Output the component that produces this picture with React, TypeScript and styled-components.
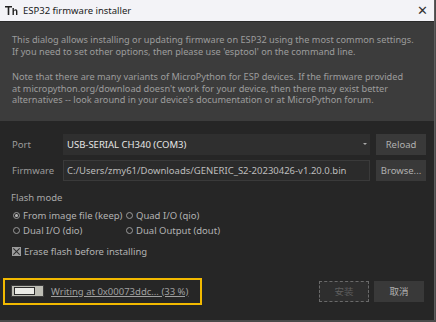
import styled, { createGlobalStyle } from "styled-components"

const GlobalStyle = createGlobalStyle`
  html, body {
    margin: 0;
    padding: 0;
    background: #4a4a4a;
  }
  body {
    font-family: "Noto Sans", "Noto Sans CJK SC", sans-serif;
  }
`

const Window = styled.div`
  width: 434px;
  height: 320px;
  border-right: 1px solid #5c5c5c;
  background: #262626;
  display: flex;
  flex-direction: column;
  overflow: hidden;
`

const TitleBar = styled.div`
  height: 21px;
  background: #f3f3f7;
  border-bottom: 1px solid #2a2a2a;
  display: flex;
  align-items: center;
  padding: 0 6px 0 5px;
  gap: 4px;
  font-size: 9.5px;
  color: #1a1a1a;
`

const Title = styled.span`
  flex: 1;
`

const CloseX = styled.span`
  font-size: 13px;
  color: #333;
  line-height: 1;
`

const Info = styled.div`
  background: #3c3c3c;
  padding: 12px 12px 15px;
  color: #9c9c9c;
  font-size: 9.2px;
  line-height: 11.6px;
  display: flex;
  flex-direction: column;
  gap: 14px;
`

const Para = styled.p`
  margin: 0;
`

const Main = styled.div`
  flex: 1;
  display: flex;
  flex-direction: column;
  padding: 13px 10px 0 11px;
  color: #a8a8a8;
  font-size: 9.5px;
`

const FormGrid = styled.div`
  display: grid;
  grid-template-columns: 46px 1fr 48px;
  column-gap: 6px;
  row-gap: 5px;
  align-items: center;
`

const Label = styled.span`
  padding-left: 1px;
  color: #9c9c9c;
`

const Combo = styled.div`
  height: 21px;
  background: #2f2f2f;
  display: flex;
  align-items: center;
  padding: 0 3px 0 4px;
  color: #e6e6e6;
`

const ComboText = styled.span`
  flex: 1;
`

const Arrow = styled.span`
  width: 0;
  height: 0;
  border-left: 2px solid transparent;
  border-right: 2px solid transparent;
  border-top: 2px solid #aaa;
`

const Input = styled.div`
  height: 19px;
  background: #2b2b2b;
  border: 1px solid #3a3a3a;
  display: flex;
  align-items: center;
  padding: 0 3px;
  color: #bdbdbd;
  white-space: nowrap;
  overflow: hidden;
`

const Button = styled.div<{ $dashed?: boolean }>`
  height: 19px;
  background: ${(p) => (p.$dashed ? "#2e2e2e" : "#393939")};
  border: 1px ${(p) => (p.$dashed ? "dashed #6a6a6a" : "solid #393939")};
  color: ${(p) => (p.$dashed ? "#5e5e5e" : "#b0b0b0")};
  display: flex;
  align-items: center;
  justify-content: center;
  width: 48px;
  box-sizing: content-box;
`

const SectionTitle = styled.div`
  margin-top: 10px;
  color: #a8a8a8;
`

const Options = styled.div`
  display: grid;
  grid-template-columns: 113px auto;
  row-gap: 2px;
  margin-top: 5px;
  padding-left: 2px;
`

const Option = styled.label`
  display: flex;
  align-items: center;
  gap: 3px;
  color: #b2b2b2;
`

const Radio = styled.span<{ $on?: boolean }>`
  width: 5px;
  height: 5px;
  border: 1px solid #9a9a9a;
  border-radius: 50%;
  display: flex;
  align-items: center;
  justify-content: center;
  &::after {
    content: "";
    width: 3px;
    height: 3px;
    border-radius: 50%;
    background: ${(p) => (p.$on ? "#bbb" : "transparent")};
  }
`

const CheckRow = styled.label`
  display: flex;
  align-items: center;
  gap: 3px;
  margin-top: 8px;
  padding-left: 1px;
  color: #b2b2b2;
`

const Check = styled.span`
  width: 7px;
  height: 7px;
  background: #9c9c9c;
  border: 1px solid #9c9c9c;
  position: relative;
  &::before,
  &::after {
    content: "";
    position: absolute;
    left: 3px;
    top: -1px;
    width: 1px;
    height: 9px;
    background: #2a2a2a;
    transform: rotate(45deg);
  }
  &::after {
    transform: rotate(-45deg);
  }
`

const Footer = styled.div`
  margin-top: 20px;
  display: flex;
  align-items: center;
  margin-left: -8px;
`

const Highlight = styled.div`
  width: 189px;
  height: 23px;
  border: 2px solid #f2b900;
  display: flex;
  align-items: center;
  gap: 7px;
  padding-left: 6px;
`

const Progress = styled.div`
  width: 29px;
  height: 10px;
  border: 1px solid #3c3c3c;
  background: #bdbdb4;
  display: flex;
  align-items: center;
  padding-left: 2px;
`

const Fill = styled.div`
  width: 19px;
  height: 6px;
  border: 1px solid #2c2c2c;
  background: #ebebe6;
`

const Status = styled.span`
  color: #a0a0a0;
  text-decoration: underline;
  white-space: nowrap;
`

const Spacer = styled.div`
  flex: 1;
`

const Buttons = styled.div`
  display: flex;
  gap: 5px;
`

export default function App() {
  return (
    <>
      <GlobalStyle />
      <Window>
        <TitleBar>
          <svg width="14" height="11" viewBox="0 0 14 11">
            <path d="M0 1h7v1.6H4.3V10H2.7V2.6H0z" fill="#222" />
            <path d="M7.5 3h1.4v2.2c.5-.6 1.1-.9 1.8-.9 1.1 0 1.7.7 1.7 2V10h-1.4V6.6c0-.7-.3-1-.8-1-.6 0-1.3.5-1.3 1.3V10H7.5z" fill="#222" />
          </svg>
          <Title>ESP32 firmware installer</Title>
          <CloseX>✕</CloseX>
        </TitleBar>
        <Info>
          <Para>
            This dialog allows installing or updating firmware on ESP32 using the most common settings.
            <br />
            If you need to set other options, then please use 'esptool' on the command line.
          </Para>
          <Para>
            Note that there are many variants of MicroPython for ESP devices. If the firmware provided
            <br />
            at micropython.org/download doesn't work for your device, then there may exist better
            <br />
            alternatives -- look around in your device's documentation or at MicroPython forum.
          </Para>
        </Info>
        <Main>
          <FormGrid>
            <Label>Port</Label>
            <Combo>
              <ComboText>USB-SERIAL CH340 (COM3)</ComboText>
              <Arrow />
            </Combo>
            <Button>Reload</Button>
            <Label>Firmware</Label>
            <Input>C:/Users/zmy61/Downloads/GENERIC_S2-20230426-v1.20.0.bin</Input>
            <Button>Browse...</Button>
          </FormGrid>
          <SectionTitle>Flash mode</SectionTitle>
          <Options>
            <Option>
              <Radio $on />
              From image file (keep)
            </Option>
            <Option>
              <Radio />
              Quad I/O (qio)
            </Option>
            <Option>
              <Radio />
              Dual I/O (dio)
            </Option>
            <Option>
              <Radio />
              Dual Output (dout)
            </Option>
          </Options>
          <CheckRow>
            <Check />
            Erase flash before installing
          </CheckRow>
          <Footer>
            <Highlight>
              <Progress>
                <Fill />
              </Progress>
              <Status>Writing at 0x00073ddc... (33 %)</Status>
            </Highlight>
            <Spacer />
            <Buttons>
              <Button $dashed>安装</Button>
              <Button>取消</Button>
            </Buttons>
          </Footer>
        </Main>
      </Window>
    </>
  )
}
